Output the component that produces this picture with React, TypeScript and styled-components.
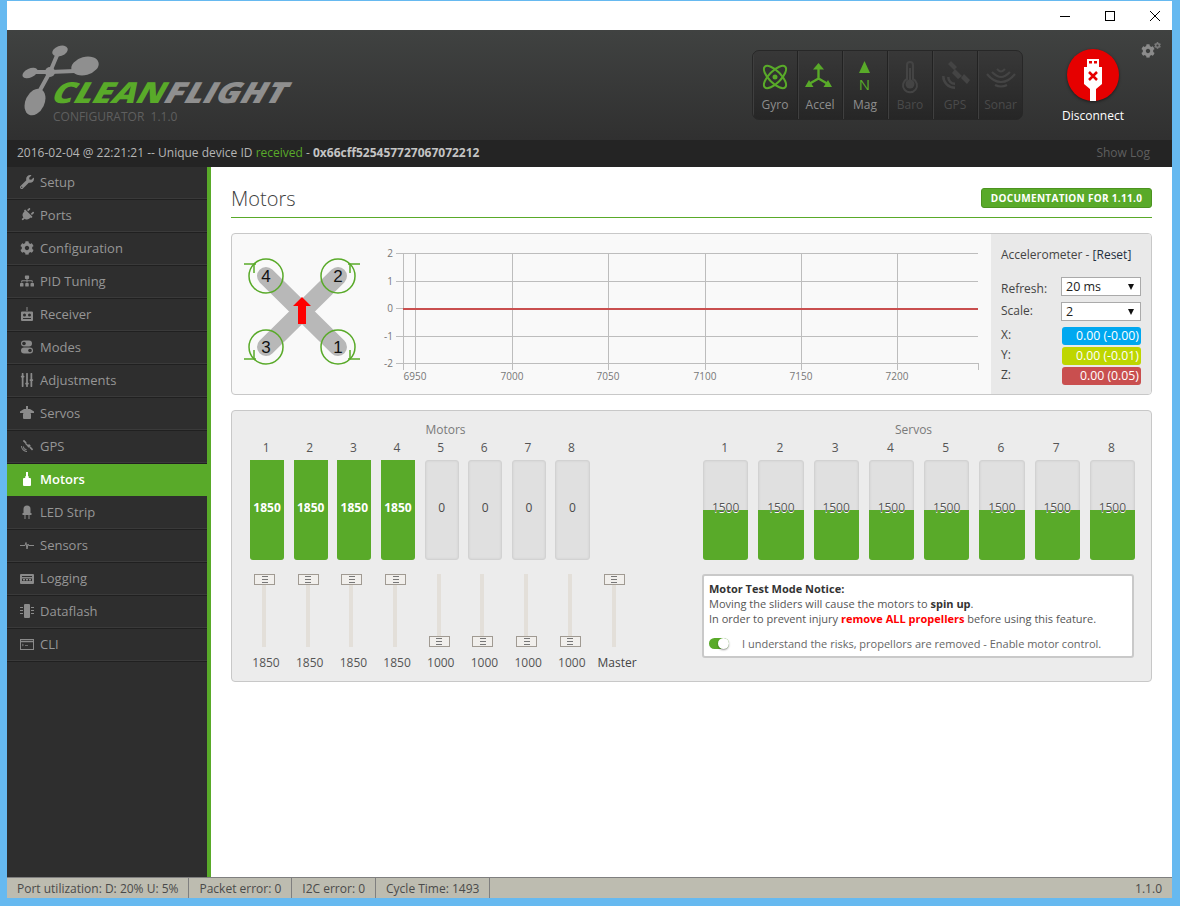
import styled, { createGlobalStyle } from 'styled-components';
import { FaWrench, FaPlug, FaCog, FaSitemap, FaSlidersH } from 'react-icons/fa';

const GREEN = '#59aa29';

const GlobalStyle = createGlobalStyle`
  html, body {
    margin: 0;
    padding: 0;
    background: #66b9f0;
    font-family: "Open Sans", "Liberation Sans", sans-serif;
  }
  * {
    box-sizing: border-box;
  }
`;

const Frame = styled.div`
  width: 1180px;
  height: 906px;
  padding: 1px 8px 8px 7px;
  background: #66b9f0;
  display: flex;
  flex-direction: column;
  overflow: hidden;
`;

const TitleBar = styled.div`
  height: 29px;
  flex: none;
  background: #fff;
  display: flex;
  justify-content: flex-end;
  align-items: center;
`;

const WinButton = styled.div`
  width: 45px;
  height: 29px;
  display: flex;
  align-items: center;
  justify-content: center;
  &:last-child {
    width: 34px;
    margin-left: 6px;
  }
`;

const Header = styled.header`
  height: 110px;
  flex: none;
  background: linear-gradient(#404241, #303030);
  display: flex;
  align-items: flex-start;
  position: relative;
`;

const Logo = styled.div`
  width: 745px;
  height: 110px;
  flex: none;
  position: relative;
`;

const LogoWord = styled.div`
  position: absolute;
  left: 47px;
  top: 42px;
  font-style: italic;
  font-weight: 800;
  font-size: 29px;
  line-height: 40px;
  white-space: nowrap;
  transform-origin: left center;
  transform: scaleX(1.22) skewX(-14deg);
  color: #8f8f8f;
  span {
    color: ${GREEN};
  }
`;

const LogoSub = styled.div`
  position: absolute;
  left: 46px;
  top: 78px;
  font-size: 12px;
  line-height: 17px;
  color: #5f5f5f;
  white-space: pre;
`;

const DroneLogo = styled.svg`
  position: absolute;
  left: 14px;
  top: 14px;
  width: 90px;
  height: 76px;
`;

const SensorGroup = styled.div`
  margin-top: 20px;
  width: 271px;
  height: 70px;
  display: flex;
  border: 1px solid #272727;
  border-radius: 7px;
  background: linear-gradient(#383838, #262626);
  overflow: hidden;
`;

const SensorCell = styled.div<{ $on?: boolean }>`
  width: 45px;
  flex: none;
  border-right: 1px solid #222;
  box-shadow: inset 1px 0 0 #3f3f3f;
  display: flex;
  flex-direction: column;
  align-items: center;
  padding-top: 7px;
  color: ${(p) => (p.$on ? '#8e8e8e' : '#4a4a4a')};
  font-size: 12px;
  line-height: 16px;
  &:last-child {
    border-right: 0;
  }
  svg {
    display: block;
    height: 36px;
    width: 36px;
    margin-bottom: 3px;
  }
`;

const Connect = styled.div`
  margin-left: 30px;
  margin-top: 19px;
  width: 80px;
  display: flex;
  flex-direction: column;
  align-items: center;
  color: #fff;
  font-size: 12px;
  line-height: 16px;
  font-weight: 400;
`;

const ConnectCircle = styled.div`
  width: 52px;
  height: 52px;
  border-radius: 50%;
  background: #e60000;
  box-shadow: 0 1px 3px rgba(0, 0, 0, 0.5);
  margin-bottom: 7px;
  display: flex;
  justify-content: center;
`;

const GearCorner = styled.div`
  position: absolute;
  right: 11px;
  top: 12px;
  display: flex;
  align-items: flex-start;
  color: #8b8b8b;
  svg:first-child {
    width: 14px;
    height: 14px;
    margin-top: 2px;
  }
  svg:last-child {
    width: 7px;
    height: 7px;
    margin-left: -1px;
    color: #7a7a7a;
  }
`;

const LogBar = styled.div`
  height: 27px;
  flex: none;
  background: #242424;
  display: flex;
  align-items: center;
  justify-content: space-between;
  padding: 0 22px 2px 10px;
  font-size: 12px;
  font-weight: 400;
  color: #b5b5b5;
  b {
    font-weight: 700;
    color: #c4c4c4;
  }
  i {
    font-style: normal;
    font-weight: 400;
    color: ${GREEN};
  }
`;

const ShowLog = styled.span`
  color: #5f5f5f;
  font-weight: 400;
`;

const Middle = styled.div`
  flex: 1;
  display: flex;
  min-height: 0;
`;

const Sidebar = styled.nav`
  width: 204px;
  flex: none;
  background: #2e2e2e;
  border-right: 4px solid ${GREEN};
`;

const NavItem = styled.div<{ $active?: boolean }>`
  height: 33px;
  display: flex;
  align-items: center;
  padding: 0 0 2px 13px;
  gap: 6px;
  font-size: 13px;
  font-weight: ${(p) => (p.$active ? 600 : 400)};
  color: ${(p) => (p.$active ? '#fff' : '#969696')};
  background: ${(p) => (p.$active ? GREEN : 'transparent')};
  border-bottom: 1px solid #202020;
  box-shadow: inset 0 -1px 0 #3a3a3a;
  ${(p) => (p.$active ? 'box-shadow: none; border-bottom-color: #2e2e2e;' : '')}
  svg {
    width: 14px;
    height: 14px;
    flex: none;
    color: ${(p) => (p.$active ? '#fff' : '#8a8a8a')};
  }
`;

const Content = styled.main`
  flex: 1;
  background: #fff;
  padding: 21px 20px 0 20px;
`;

const TitleRow = styled.div`
  height: 30px;
  display: flex;
  justify-content: space-between;
  align-items: flex-start;
  border-bottom: 1px solid ${GREEN};
`;

const Title = styled.h1`
  margin: 0;
  font-size: 20px;
  line-height: 22px;
  font-weight: 300;
  color: #3d3d3d;
`;

const DocButton = styled.div`
  width: 171px;
  height: 20px;
  background: ${GREEN};
  border: 1px solid #4c9320;
  border-radius: 3px;
  color: #fff;
  font-size: 10px;
  font-weight: 700;
  letter-spacing: 0.3px;
  display: flex;
  align-items: center;
  justify-content: center;
`;

const Panel = styled.section<{ $bg: string; $h: number; $mt: number }>`
  margin-top: ${(p) => p.$mt}px;
  height: ${(p) => p.$h}px;
  background: ${(p) => p.$bg};
  border: 1px solid #c8c8c8;
  border-radius: 4px;
  display: flex;
  overflow: hidden;
`;

const Quad = styled.svg`
  width: 150px;
  height: 160px;
  flex: none;
`;

const Chart = styled.svg`
  width: 609px;
  height: 160px;
  flex: none;
`;

const AccelSide = styled.aside`
  flex: 1;
  background: #e9e9e9;
  padding: 13px 10px 0 10px;
  font-size: 12px;
  line-height: 16px;
  color: #444;
`;

const AccelTitle = styled.div`
  margin-bottom: 14px;
  span {
    color: #1f2f3f;
  }
`;

const AccelRow = styled.div<{ $labelTop: number }>`
  height: 25px;
  display: flex;
  align-items: flex-start;
  justify-content: space-between;
  > span {
    margin-top: ${(p) => p.$labelTop}px;
  }
`;

const Select = styled.div`
  width: 80px;
  height: 19px;
  background: #fff;
  border: 1px solid #aaa;
  color: #222;
  font-size: 12.5px;
  display: flex;
  align-items: center;
  justify-content: space-between;
  padding: 0 6px 0 4px;
  &::after {
    content: '';
    border-left: 3px solid transparent;
    border-right: 3px solid transparent;
    border-top: 6px solid #111;
  }
`;

const AxisRow = styled.div`
  height: 20px;
  display: flex;
  justify-content: space-between;
  align-items: flex-start;
`;

const AxisValue = styled.div<{ $bg: string }>`
  width: 79px;
  height: 18px;
  border-radius: 3px;
  background: ${(p) => p.$bg};
  color: #fff;
  text-align: right;
  padding-right: 2px;
  font-size: 12.3px;
  line-height: 18px;
`;

const MotorArea = styled.div`
  width: 100%;
  display: grid;
  grid-template-columns: 410px 1fr;
  padding-left: 18px;
`;

const MotorColumn = styled.div``;

const GroupTitle = styled.div<{ $w: number }>`
  width: ${(p) => p.$w}px;
  text-align: center;
  font-size: 12px;
  line-height: 16px;
  color: #7a7a7a;
  margin-top: 11px;
`;

const MeterGrid = styled.div<{ $w: number; $n: number }>`
  width: ${(p) => p.$w}px;
  display: grid;
  grid-template-columns: repeat(${(p) => p.$n}, 1fr);
`;

const MeterCol = styled.div<{ $gap: number }>`
  padding-right: ${(p) => p.$gap}px;
  display: flex;
  flex-direction: column;
`;

const MeterNum = styled.div`
  height: 18px;
  line-height: 18px;
  font-size: 12px;
  text-align: center;
  color: #555;
  margin: 1px 0 3px;
  transform: translateX(-1px);
`;

const Meter = styled.div`
  height: 100px;
  background: #e0e0e0;
  border: 1px solid #d2d2d2;
  box-shadow: inset 0 0 2px #c9c9c9;
  border-radius: 3px;
  position: relative;
  display: flex;
  align-items: center;
  justify-content: center;
`;

const MeterFill = styled.div<{ $h: number }>`
  position: absolute;
  left: -1px;
  right: -1px;
  bottom: -1px;
  height: ${(p) => p.$h}px;
  border-radius: 0 0 3px 3px;
  background: ${GREEN};
`;

const MeterLabel = styled.span<{ $white?: boolean }>`
  position: relative;
  font-size: 12px;
  color: ${(p) => (p.$white ? '#fff' : '#4a4a4a')};
  font-weight: ${(p) => (p.$white ? 700 : 400)};
  margin-top: -6px;
`;

const ServoLabel = styled.span`
  position: relative;
  font-size: 12px;
  color: #555;
  text-shadow: 0 1px 0 #fff;
  margin-top: -6px;
`;

const SliderRow = styled.div`
  display: grid;
  grid-template-columns: repeat(8, 43.7px) 46px;
  margin-top: 14px;
`;

const SliderCol = styled.div`
  display: flex;
  flex-direction: column;
  align-items: center;
  width: 28px;
`;

const Track = styled.div`
  width: 4px;
  height: 73px;
  background: #e3dfd9;
  position: relative;
`;

const Thumb = styled.div<{ $low?: boolean }>`
  position: absolute;
  left: -8px;
  top: ${(p) => (p.$low ? '62px' : '0')};
  width: 21px;
  height: 11px;
  background: #f1efec;
  border: 1px solid #a09a92;
  display: flex;
  align-items: center;
  justify-content: center;
  &::after {
    content: '';
    width: 6px;
    height: 5px;
    border-top: 1px solid #777;
    border-bottom: 1px solid #777;
    background: linear-gradient(#777, #777) center / 100% 1px no-repeat;
  }
`;

const SliderValue = styled.div`
  margin: 8px 0 0 4px;
  font-size: 12px;
  line-height: 16px;
  color: #555;
  white-space: nowrap;
`;

const MasterValue = styled(SliderValue)`
  margin-left: 7px;
  color: #444;
`;

const ServoColumn = styled.div`
  margin-left: 43px;
`;

const Notice = styled.div`
  width: 432px;
  height: 84px;
  margin: 14px 0 0 -1px;
  background: #fff;
  border: 2px solid #c9c9c9;
  border-radius: 3px;
  padding: 5px 4px 0 5px;
  font-size: 11px;
  line-height: 15px;
  color: #555;
  p {
    margin: 0;
  }
  b {
    font-weight: 700;
    color: #333;
  }
  em {
    font-style: normal;
    font-weight: 700;
    color: #f00;
  }
`;

const ToggleRow = styled.div`
  display: flex;
  align-items: center;
  margin-top: 10px;
  color: #666;
`;

const Toggle = styled.div`
  width: 20px;
  height: 11px;
  border-radius: 6px;
  background: ${GREEN};
  position: relative;
  margin-right: 13px;
  &::after {
    content: '';
    position: absolute;
    right: 0;
    top: 0;
    width: 11px;
    height: 11px;
    border-radius: 50%;
    background: #fff;
    box-shadow: 0 1px 2px rgba(0, 0, 0, 0.4);
  }
`;

const StatusBar = styled.footer`
  height: 21px;
  flex: none;
  background: #bdbcb0;
  border-top: 1px solid #7f7f7f;
  display: flex;
  align-items: center;
  font-size: 12px;
  color: #4a4a4a;
`;

const StatusItem = styled.div`
  height: 100%;
  padding: 0 10px;
  display: flex;
  align-items: center;
  border-right: 1px solid #7f7f7f;
`;

const StatusVersion = styled.div`
  margin-left: auto;
  padding-right: 10px;
`;

const G = GREEN;

// nav icons that the icon packages do not have
const ReceiverIcon = () => (
  <svg viewBox="0 0 14 14" fill="currentColor">
    <rect x="6.5" y="0" width="1" height="4" />
    <path d="M2 4.500h10a1 1 0 0 1 1 1V13a1 1 0 0 1-1 1H2a1 1 0 0 1-1-1V5.500a1 1 0 0 1 1-1z" />
    <circle cx="4.500" cy="8" r="1.500" fill="#2e2e2e" />
    <circle cx="9.500" cy="8" r="1.500" fill="#2e2e2e" />
    <rect x="3" y="11" width="8" height="1" fill="#2e2e2e" />
  </svg>
);
const ModesIcon = () => (
  <svg viewBox="0 0 14 14" fill="currentColor">
    <rect x="1" y="0.500" width="11" height="6" rx="3" />
    <rect x="1" y="7.500" width="12" height="6" rx="3" />
    <circle cx="4" cy="3.500" r="1.800" fill="#2e2e2e" />
    <circle cx="10" cy="10.500" r="1.800" fill="#2e2e2e" />
  </svg>
);
const ServoIcon = () => (
  <svg viewBox="0 0 14 14" fill="currentColor">
    <rect x="6" y="0" width="2" height="3" />
    <path d="M0 5.500 4 3h6l4 2.500V7H0z" />
    <rect x="3" y="7" width="8" height="6" rx="1" />
  </svg>
);
const SatIcon = () => (
  <svg viewBox="0 0 14 14" fill="currentColor">
    <path d="M4 .8 6.700 3.500 5.500 4.700 2.800 2zM9 5l1.800 1.800-2 2L7 7zM10.500 7.500 13.200 10.200 12 11.400 9.300 8.700zM5.200 4.900l.9-.9 3 3-.9.900z" />
    <path d="M1 7a6 6 0 0 0 6 6v-1a5 5 0 0 1-5-5zM3 7.500A3.500 3.500 0 0 0 6.500 11v-1A2.500 2.500 0 0 1 4 7.500z" />
  </svg>
);
const MotorIcon = () => (
  <svg viewBox="0 0 14 14" fill="currentColor">
    <rect x="6" y="0" width="2" height="4" />
    <path d="M5.500 4h3l.5 2.500H5z" />
    <rect x="3" y="6" width="8" height="8" rx="1" />
  </svg>
);
const LedIcon = () => (
  <svg viewBox="0 0 14 14" fill="currentColor">
    <path d="M3.500 9V4a3.500 3.500 0 0 1 7 0v5z" />
    <rect x="2.500" y="8" width="9" height="2" />
    <rect x="4.500" y="10" width="1" height="4" />
    <rect x="8.500" y="10" width="1" height="4" />
  </svg>
);
const PulseIcon = () => (
  <svg viewBox="0 0 14 14" fill="none" stroke="currentColor" strokeWidth="1">
    <path d="M0 7.500h5l1-3 1 6.500 1-5 .6 1.500H14" />
  </svg>
);
const LoggingIcon = () => (
  <svg viewBox="0 0 14 14" fill="currentColor">
    <path d="M1 3h12a1 1 0 0 1 1 1v8a1 1 0 0 1-1 1H1a1 1 0 0 1-1-1V4a1 1 0 0 1 1-1z" />
    <rect x="2" y="5" width="10" height="1" fill="#2e2e2e" />
    <rect x="2" y="7.500" width="10" height="2.500" fill="#2e2e2e" />
    <rect x="3" y="8" width="2" height="1.500" />
    <rect x="6" y="8" width="2" height="1.500" />
    <rect x="9" y="8" width="2" height="1.500" />
  </svg>
);
const FlashIcon = () => (
  <svg viewBox="0 0 14 14" fill="currentColor">
    <rect x="4" y="0" width="6" height="14" rx="1" />
    <rect x="0" y="3" width="3" height="1" />
    <rect x="0" y="6" width="3" height="1" />
    <rect x="0" y="9" width="3" height="1" />
    <rect x="11" y="3" width="3" height="1" />
    <rect x="11" y="6" width="3" height="1" />
    <rect x="11" y="9" width="3" height="1" />
  </svg>
);
const CliIcon = () => (
  <svg viewBox="0 0 14 14" fill="none" stroke="currentColor">
    <rect x="0.500" y="2.500" width="13" height="10" />
    <path d="M0 4.500h14" strokeWidth="1.500" />
    <path d="M2 7l1.500 1L2 9M5 8.500h3" strokeWidth="0.700" />
  </svg>
);

const navItems = [
  { label: 'Setup', icon: <FaWrench /> },
  { label: 'Ports', icon: <FaPlug style={{ transform: 'rotate(45deg)' }} /> },
  { label: 'Configuration', icon: <FaCog /> },
  { label: 'PID Tuning', icon: <FaSitemap /> },
  { label: 'Receiver', icon: <ReceiverIcon /> },
  { label: 'Modes', icon: <ModesIcon /> },
  { label: 'Adjustments', icon: <FaSlidersH style={{ transform: 'rotate(90deg)' }} /> },
  { label: 'Servos', icon: <ServoIcon /> },
  { label: 'GPS', icon: <SatIcon /> },
  { label: 'Motors', icon: <MotorIcon />, active: true },
  { label: 'LED Strip', icon: <LedIcon /> },
  { label: 'Sensors', icon: <PulseIcon /> },
  { label: 'Logging', icon: <LoggingIcon /> },
  { label: 'Dataflash', icon: <FlashIcon /> },
  { label: 'CLI', icon: <CliIcon /> },
];

const GyroIcon = () => (
  <svg viewBox="0 0 36 36" fill="none" stroke={G} strokeWidth="2">
    <ellipse cx="18" cy="19" rx="14.500" ry="6" transform="rotate(45 18 19)" />
    <ellipse cx="18" cy="19" rx="14.500" ry="6" transform="rotate(-45 18 19)" />
    <circle cx="18" cy="19" r="2.500" fill={G} stroke="none" />
  </svg>
);
const AccelIcon = () => (
  <svg viewBox="0 0 36 36" fill={G} stroke="none">
    <path d="M16.500 5l5.500 6.500H11z" />
    <path d="M16.500 11v9.500M16.500 20.500 7 26M16.500 20.500 26 26" stroke={G} strokeWidth="2.400" fill="none" />
    <path d="M3 29l4-7 4.500 7zM30 29l-4-7-4.500 7z" />
  </svg>
);
const MagIcon = () => (
  <svg viewBox="0 0 36 36">
    <path d="M17.500 3l5.500 12H12z" fill={G} />
    <text
      x="17.500"
      y="32"
      textAnchor="middle"
      fontSize="15"
      fontFamily="'Open Sans', sans-serif"
      fill={G}
    >
      N
    </text>
  </svg>
);
const BaroIcon = () => (
  <svg viewBox="0 0 36 36" fill="none" stroke="#444" strokeWidth="2">
    <path d="M15 21V7a3 3 0 0 1 6 0v14a7 7 0 1 1-6 0z" />
    <circle cx="18" cy="26" r="4.500" fill="#444" stroke="none" />
    <path d="M18 10v14" />
  </svg>
);
const GpsIcon = () => (
  <svg viewBox="0 0 36 36" fill="#444">
    <path d="M14 3l6 6-3 3-6-6zM27 16l6 6-3 4-6-6zM18 11l7 7-4 3-6-6z" />
    <path d="M5 18a13 13 0 0 0 13 13v-2.500A10.500 10.500 0 0 1 7.500 18zM10 19a8 8 0 0 0 8 8v-2.500A5.500 5.500 0 0 1 12.500 19z" />
  </svg>
);
const SonarIcon = () => (
  <svg viewBox="0 0 36 36" fill="none" stroke="#444" strokeWidth="2.200">
    <path d="M4 16c4 5 9 8 14 8s10-3 14-8" />
    <path d="M9 14c3 3 6 5 9 5s6-2 9-5" />
    <path d="M14 11c1 1 2.500 2.500 4 2.500s3-1.500 4-2.500" />
    <path d="M12 27c2 1 4 1.500 6 1.500s4-.5 6-1.500" />
  </svg>
);

const sensors = [
  { label: 'Gyro', icon: <GyroIcon />, on: true },
  { label: 'Accel', icon: <AccelIcon />, on: true },
  { label: 'Mag', icon: <MagIcon />, on: true },
  { label: 'Baro', icon: <BaroIcon /> },
  { label: 'GPS', icon: <GpsIcon /> },
  { label: 'Sonar', icon: <SonarIcon /> },
];

const motorValues = [1850, 1850, 1850, 1850, 0, 0, 0, 0];
const sliderValues = [1850, 1850, 1850, 1850, 1000, 1000, 1000, 1000];

const QuadDrawing = () => {
  const rotors = [
    { x: 106, y: 113, n: '1', sx: 1, sy: 1 },
    { x: 106, y: 42, n: '2', sx: 1, sy: -1 },
    { x: 34, y: 113, n: '3', sx: -1, sy: 1 },
    { x: 34, y: 42, n: '4', sx: -1, sy: -1 },
  ];
  return (
    <Quad viewBox="0 0 150 160">
      <path d="M34 42 106 113M106 42 34 113" stroke="#b8b8b8" strokeWidth="18" strokeLinecap="round" />
      {rotors.map((r) => (
        <g key={r.n}>
          <circle cx={r.x} cy={r.y} r="17" fill="none" stroke={G} strokeWidth="1.500" />
          <path
            d={`M${r.x + r.sx * 10} ${r.y + r.sy * 12}H${r.x + r.sx * 22} M${r.x + r.sx * 12} ${r.y + r.sy * 12}V${r.y + r.sy * 3}`}
            fill="none"
            stroke={G}
            strokeWidth="1.500"
          />
          <text
            x={r.x}
            y={r.y + 6}
            textAnchor="middle"
            fontSize="17"
            fontFamily="'Liberation Sans', sans-serif"
            fill="#111"
          >
            {r.n}
          </text>
        </g>
      ))}
      <path d="M70 63 79 72H74V90H66V72H61z" fill="#f00" />
    </Quad>
  );
};

const ChartDrawing = () => {
  const rows = [
    { y: 19, t: '2' },
    { y: 47, t: '1' },
    { y: 74, t: '0' },
    { y: 102, t: '-1' },
    { y: 129, t: '-2' },
  ];
  const xs = [
    { x: 33, t: '6950' },
    { x: 130, t: '7000' },
    { x: 226, t: '7050' },
    { x: 323, t: '7100' },
    { x: 419, t: '7150' },
    { x: 515, t: '7200' },
  ];
  const font = "'Open Sans', sans-serif";
  return (
    <Chart viewBox="0 0 609 160">
      {rows.map((r) => (
        <g key={r.t}>
          <path d={`M14 ${r.y + 0.5}H596`} stroke="#bdbdbd" />
          <text x="11" y={r.y + 4} textAnchor="end" fontSize="10" fontFamily={font} fill="#777">
            {r.t}
          </text>
        </g>
      ))}
      <path d="M21.500 19V136M596.500 129V136" stroke="#bdbdbd" />
      {xs.map((a) => (
        <g key={a.t}>
          <path d={`M${a.x + 0.5} 19V136`} stroke="#bdbdbd" />
          <text x={a.x} y="146" textAnchor="middle" fontSize="10" fontFamily={font} fill="#777">
            {a.t}
          </text>
        </g>
      ))}
      <path d="M21 75H596" stroke="#c94f4f" strokeWidth="2" />
    </Chart>
  );
};

export default function App() {
  return (
    <>
      <GlobalStyle />
      <Frame>
        <TitleBar>
          <WinButton>
            <svg width="10" height="10">
              <path d="M0 5.500h10" stroke="#000" />
            </svg>
          </WinButton>
          <WinButton>
            <svg width="10" height="10">
              <rect x="0.500" y="0.500" width="9" height="9" fill="none" stroke="#000" />
            </svg>
          </WinButton>
          <WinButton>
            <svg width="10" height="10">
              <path d="M0 0l10 10M10 0 0 10" stroke="#000" />
            </svg>
          </WinButton>
        </TitleBar>
        <Header>
          <Logo>
            <DroneLogo viewBox="0 0 90 76" fill="#8f8f8f">
              <ellipse cx="39" cy="7" rx="8" ry="5" transform="rotate(-20 39 7)" />
              <ellipse cx="64" cy="22" rx="14" ry="9" transform="rotate(-15 64 22)" />
              <ellipse cx="9" cy="29" rx="8" ry="4.500" transform="rotate(-25 9 29)" />
              <ellipse cx="14" cy="58" rx="9.500" ry="14" transform="rotate(25 14 58)" />
              <circle cx="29" cy="28" r="5" />
              <path
                d="M29 28 37 9M29 28 54 27M29 28H11M29 28 18 48"
                stroke="#8f8f8f"
                strokeWidth="4"
                fill="none"
              />
            </DroneLogo>
            <LogoWord>
              <span>CLEAN</span>FLIGHT
            </LogoWord>
            <LogoSub>CONFIGURATOR  1.1.0</LogoSub>
          </Logo>
          <SensorGroup>
            {sensors.map((s) => (
              <SensorCell key={s.label} $on={s.on}>
                {s.icon}
                {s.label}
              </SensorCell>
            ))}
          </SensorGroup>
          <Connect>
            <ConnectCircle>
              <svg width="24" height="52" viewBox="0 0 24 52" fill="#fff">
                <path d="M6 10h12v8h3v17l-6 5v12h-6V40l-6-5V18h3z" />
                <rect x="8" y="12" width="3" height="2.500" fill="#e60000" />
                <rect x="13" y="12" width="3" height="2.500" fill="#e60000" />
                <path d="M8 23l8 8M16 23l-8 8" stroke="#e60000" strokeWidth="2.500" />
              </svg>
            </ConnectCircle>
            Disconnect
          </Connect>
          <GearCorner>
            <FaCog />
            <FaCog />
          </GearCorner>
        </Header>
        <LogBar>
          <span>
            2016-02-04 @ 22:21:21 -- Unique device ID <i>received</i> - <b>0x66cff525457727067072212</b>
          </span>
          <ShowLog>Show Log</ShowLog>
        </LogBar>
        <Middle>
          <Sidebar>
            {navItems.map((n) => (
              <NavItem key={n.label} $active={n.active}>
                {n.icon}
                {n.label}
              </NavItem>
            ))}
          </Sidebar>
          <Content>
            <TitleRow>
              <Title>Motors</Title>
              <DocButton>DOCUMENTATION FOR 1.11.0</DocButton>
            </TitleRow>
            <Panel $bg="#f9f9f9" $h={162} $mt={15}>
              <QuadDrawing />
              <ChartDrawing />
              <AccelSide>
                <AccelTitle>
                  Accelerometer - <span>[Reset]</span>
                </AccelTitle>
                <AccelRow $labelTop={4}>
                  <span>Refresh:</span>
                  <Select>20 ms</Select>
                </AccelRow>
                <AccelRow $labelTop={1}>
                  <span>Scale:</span>
                  <Select>2</Select>
                </AccelRow>
                <AxisRow>
                  X:
                  <AxisValue $bg="#00a8f0">0.00 (-0.00)</AxisValue>
                </AxisRow>
                <AxisRow>
                  Y:
                  <AxisValue $bg="#bed600">0.00 (-0.01)</AxisValue>
                </AxisRow>
                <AxisRow>
                  Z:
                  <AxisValue $bg="#c94f4f">0.00 (0.05)</AxisValue>
                </AxisRow>
              </AccelSide>
            </Panel>
            <Panel $bg="#ececec" $h={272} $mt={15}>
              <MotorArea>
                <MotorColumn>
                  <GroupTitle $w={391}>Motors</GroupTitle>
                  <MeterGrid $w={349} $n={8}>
                    {motorValues.map((v, i) => (
                      <MeterCol key={i} $gap={9.5}>
                        <MeterNum>{i + 1}</MeterNum>
                        <Meter>
                          {v > 0 && <MeterFill $h={100} />}
                          <MeterLabel $white={v > 0}>{v}</MeterLabel>
                        </Meter>
                      </MeterCol>
                    ))}
                  </MeterGrid>
                  <SliderRow>
                    {sliderValues.map((v, i) => (
                      <SliderCol key={i}>
                        <Track>
                          <Thumb $low={v === 1000} />
                        </Track>
                        <SliderValue>{v}</SliderValue>
                      </SliderCol>
                    ))}
                    <SliderCol>
                      <Track>
                        <Thumb />
                      </Track>
                      <MasterValue>Master</MasterValue>
                    </SliderCol>
                  </SliderRow>
                </MotorColumn>
                <ServoColumn>
                  <GroupTitle $w={421}>Servos</GroupTitle>
                  <MeterGrid $w={442} $n={8}>
                    {motorValues.map((_, i) => (
                      <MeterCol key={i} $gap={10}>
                        <MeterNum>{i + 1}</MeterNum>
                        <Meter>
                          <MeterFill $h={50} />
                          <ServoLabel>1500</ServoLabel>
                        </Meter>
                      </MeterCol>
                    ))}
                  </MeterGrid>
                  <Notice>
                    <p>
                      <b>Motor Test Mode Notice:</b>
                    </p>
                    <p>
                      Moving the sliders will cause the motors to <b>spin up</b>.
                    </p>
                    <p>
                      In order to prevent injury <em>remove ALL propellers</em> before using this feature.
                    </p>
                    <ToggleRow>
                      <Toggle />I understand the risks, propellors are removed - Enable motor control.
                    </ToggleRow>
                  </Notice>
                </ServoColumn>
              </MotorArea>
            </Panel>
          </Content>
        </Middle>
        <StatusBar>
          <StatusItem>Port utilization: D: 20% U: 5%</StatusItem>
          <StatusItem>Packet error: 0</StatusItem>
          <StatusItem>I2C error: 0</StatusItem>
          <StatusItem>Cycle Time: 1493</StatusItem>
          <StatusVersion>1.1.0</StatusVersion>
        </StatusBar>
      </Frame>
    </>
  );
}
